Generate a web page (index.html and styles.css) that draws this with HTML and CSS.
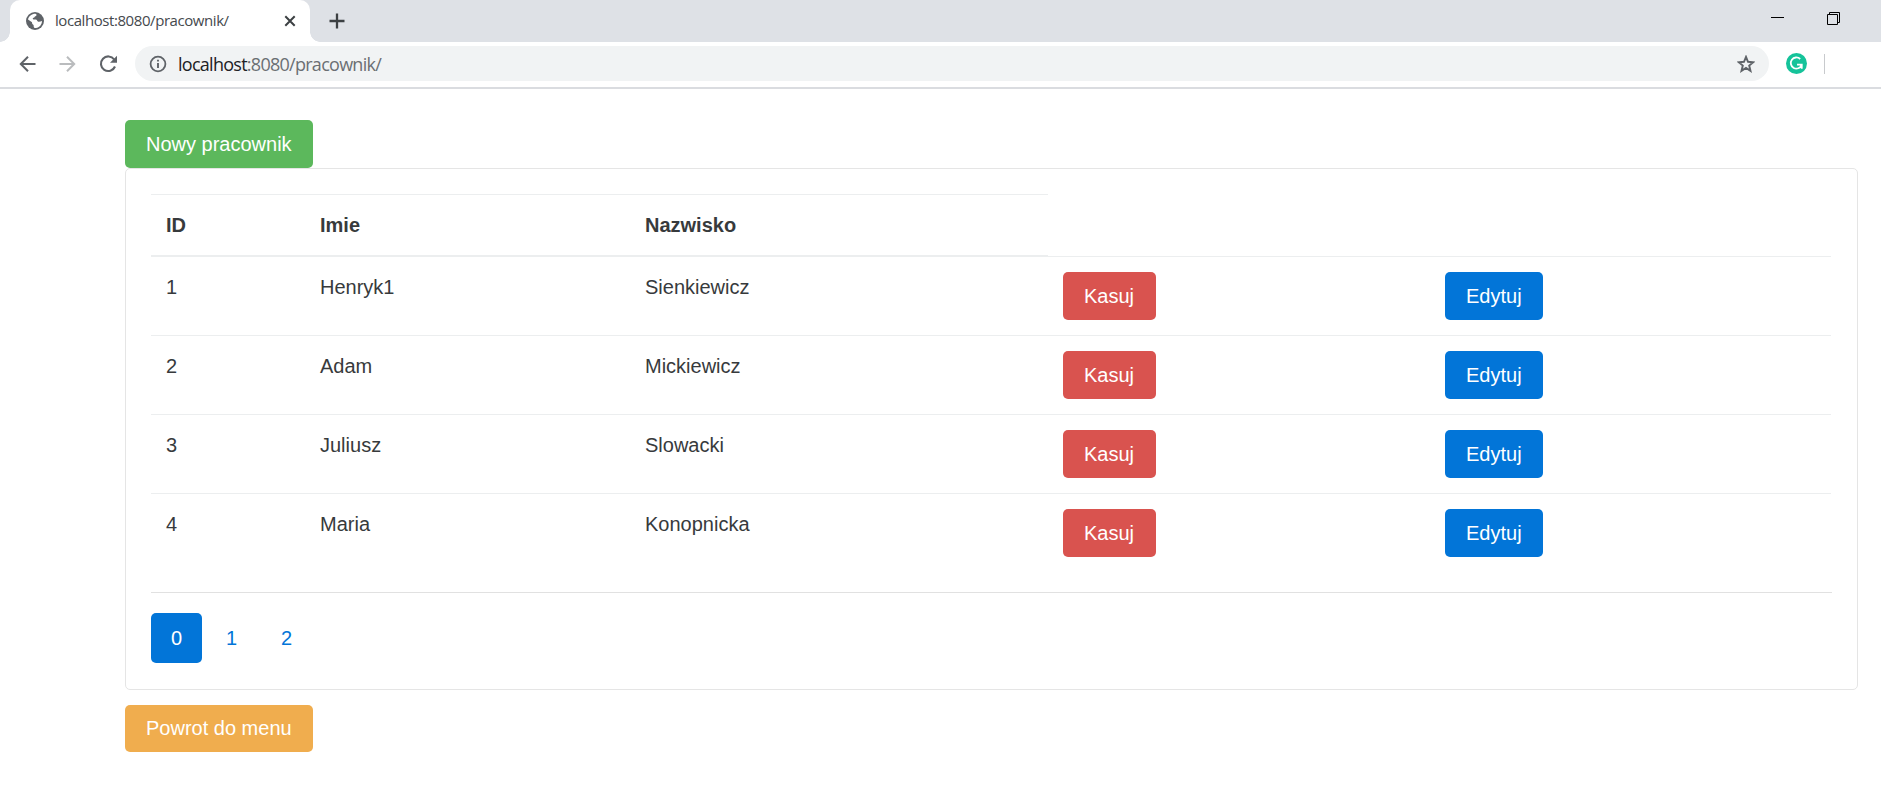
FILE: index.html
```html
<!DOCTYPE html>
<html lang="pl">
<head>
<meta charset="utf-8">
<title>localhost:8080/pracownik/</title>
<link rel="stylesheet" href="styles.css">
</head>
<body>
<header class="browser">
  <div class="tabstrip">
    <div class="tab">
      <svg class="globe" width="18" height="18" viewBox="0 0 18 18"><circle cx="9" cy="9" r="9" fill="#5f6368"/><path d="M9.500 1.800C11 2 10.800 3.800 9.500 4.200C8.500 4.500 8.800 5.600 7.600 5.800C6.500 6 6.500 7.200 7.500 7.500L10 7.600C11.500 8 11 9.600 12.300 9.800C13.800 10 14.800 9.400 16 9C16 12.500 13.500 15.500 10 16L8.500 15.900C7 15 8.300 13.500 7.300 12.800C6.200 12.300 6 11.200 6 10.200L2 7.500C2.700 4.300 5.500 1.800 9.500 1.800Z" fill="#fff"/></svg>
      <span class="tab-title">localhost:8080/pracownik/</span>
      <svg class="close" width="12" height="12" viewBox="0 0 12 12"><path d="M1.300 1.300L10.700 10.700M10.700 1.300L1.300 10.700" stroke="#3c4043" stroke-width="2"/></svg>
    </div>
    <svg class="plus" width="16" height="16" viewBox="0 0 16 16"><path d="M8 .5V15.500M.5 8H15.500" stroke="#3c4043" stroke-width="2.300"/></svg>
    <div class="window-buttons">
      <svg width="13" height="14" viewBox="0 0 13 14"><path d="M0 5.500H13" stroke="#000"/></svg>
      <svg width="13" height="13" viewBox="0 0 13 13"><path d="M.5 2.500H10.500V12.500H.5ZM2.500 2.500V.5H12.500V10.500H10.500" fill="none" stroke="#000"/></svg>
    </div>
  </div>
  <div class="toolbar">
    <svg class="nav" width="18" height="18" viewBox="0 0 18 18"><path d="M17.500 9H3M10 1.800L2.800 9L10 16.200" fill="none" stroke="#5f6368" stroke-width="2"/></svg>
    <svg class="nav" width="18" height="18" viewBox="0 0 18 18"><path d="M1.500 9H16M9 1.800L16.200 9L9 16.200" fill="none" stroke="#babcbe" stroke-width="2"/></svg>
    <svg class="nav reload" width="18" height="18" viewBox="0 0 18 18"><path d="M15.200 4.500A7.300 7.300 0 1 0 16 11.500" fill="none" stroke="#5f6368" stroke-width="2.100"/><path d="M18 .8V7.800H11Z" fill="#5f6368"/></svg>
    <div class="omnibox">
      <svg width="18" height="18" viewBox="0 0 18 18"><circle cx="9" cy="9" r="7.400" fill="none" stroke="#5f6368" stroke-width="1.800"/><path d="M9 8V13M9 4.800V6.600" stroke="#5f6368" stroke-width="1.900"/></svg>
      <span class="url"><b>localhost</b>:8080/pracownik/</span>
      <svg class="star" width="18" height="18" viewBox="0 0 18 18"><path d="M9 1.900L11 6.800L16.300 7.200L12.200 10.600L13.500 15.900L9 13L4.500 15.900L5.800 10.600L1.700 7.200L7 6.800Z" fill="none" stroke="#5f6368" stroke-width="1.900"/></svg>
    </div>
    <svg class="grammarly" width="21" height="21" viewBox="0 0 20 20"><circle cx="10" cy="10" r="10" fill="#15c39a"/><path d="M13.500 5.700A5.300 5.300 0 1 0 14.800 11.500M10.500 11H15V15" fill="none" stroke="#fff" stroke-width="1.700"/></svg>
    <span class="divider"></span>
  </div>
</header>
<main class="page">
  <a class="btn success">Nowy pracownik</a>
  <section class="card">
    <table class="table">
      <colgroup><col class="c-id"><col class="c-first"><col class="c-last"><col class="c-delete"><col></colgroup>
      <thead><tr><th>ID</th><th>Imie</th><th>Nazwisko</th></tr></thead>
      <tbody>
        <tr><td>1</td><td>Henryk1</td><td>Sienkiewicz</td><td><a class="btn danger">Kasuj</a></td><td><a class="btn primary">Edytuj</a></td></tr>
        <tr><td>2</td><td>Adam</td><td>Mickiewicz</td><td><a class="btn danger">Kasuj</a></td><td><a class="btn primary">Edytuj</a></td></tr>
        <tr><td>3</td><td>Juliusz</td><td>Slowacki</td><td><a class="btn danger">Kasuj</a></td><td><a class="btn primary">Edytuj</a></td></tr>
        <tr><td>4</td><td>Maria</td><td>Konopnicka</td><td><a class="btn danger">Kasuj</a></td><td><a class="btn primary">Edytuj</a></td></tr>
      </tbody>
    </table>
    <hr class="rule">
    <nav class="pills"><a class="pill active">0</a><a class="pill">1</a><a class="pill">2</a></nav>
  </section>
  <a class="btn warning">Powrot do menu</a>
</main>
</body>
</html>
```
FILE: styles.css
```css
* { box-sizing: border-box; }
body { margin: 0; background: #fff; color: #373a3c; font: 20px/30px "Liberation Sans", Arial, sans-serif; overflow: hidden; }
svg { display: block; flex: none; }

.browser { font-family: "Open Sans", "Noto Sans", sans-serif; }
.tabstrip { display: flex; height: 42px; padding-left: 10px; background: #dee1e6; }
.tab { position: relative; display: flex; align-items: center; width: 300px; height: 42px; padding: 0 14px 0 16px; background: #fff; border-radius: 10px 10px 0 0; }
.tab::before, .tab::after { content: ""; position: absolute; bottom: 0; width: 10px; height: 10px; }
.tab::before { left: -10px; background: radial-gradient(circle at 0 0, #dee1e6 9.5px, #fff 10px); }
.tab::after { right: -10px; background: radial-gradient(circle at 100% 0, #dee1e6 9.5px, #fff 10px); }
.tab-title { margin-left: 11px; padding-bottom: 2px; font-size: 15px; letter-spacing: -0.43px; color: #45494d; white-space: nowrap; }
.close { margin-left: auto; }
.plus { margin: 13px 0 0 19px; }
.window-buttons { display: flex; gap: 43px; margin: 12px 41px 0 auto; }

.toolbar { display: flex; align-items: center; height: 47px; padding: 0 56px 2px 18px; border-bottom: 2px solid #dadce0; }
.nav { margin-right: 22px; }
.reload { margin: 0 18px 0 1px; }
.omnibox { display: flex; align-items: center; flex: 1; height: 35px; padding: 0 14px; border-radius: 18px; background: #f1f3f4; }
.url { margin-left: 11px; font-size: 18px; letter-spacing: -0.73px; color: #6b6f73; white-space: nowrap; }
.url b { font-weight: 400; color: #202124; }
.star { margin-left: auto; }
.grammarly { margin-left: 17px; }
.divider { width: 1px; height: 20px; margin-left: 17px; background: #c8cacd; }

.page { display: flex; flex-direction: column; align-items: flex-start; padding: 31px 23px 0 125px; }
.btn { display: inline-block; height: 48px; padding: 9px 21px; border-radius: 5px; color: #fff; white-space: nowrap; vertical-align: top; }
.success { background: #5cb85c; }
.danger { min-width: 93px; background: #d9534f; }
.primary { background: #0275d8; }
.warning { height: 47px; padding-top: 8px; background: #f0ad4e; }

.card { align-self: stretch; height: 522px; margin-bottom: 15px; padding: 25px; border: 1px solid #e5e5e5; border-radius: 5px; }
.table { width: 1680px; table-layout: fixed; border-spacing: 0; }
.c-id { width: 154px; }
.c-first { width: 325px; }
.c-last { width: 418px; }
.c-delete { width: 382px; }
.table th, .table td { padding: 15px; border-top: 1px solid #eceeef; text-align: left; vertical-align: top; }
.table th { border-bottom: 1px solid #eceeef; }
.rule { margin: 20px 0; border: 0; border-top: 1px solid #e1e1e1; }
.pills { display: flex; gap: 4px; }
.pill { width: 51px; height: 50px; padding: 10px 0; border-radius: 5px; text-align: center; color: #0275d8; }
.pill.active { background: #0275d8; color: #fff; }
```
